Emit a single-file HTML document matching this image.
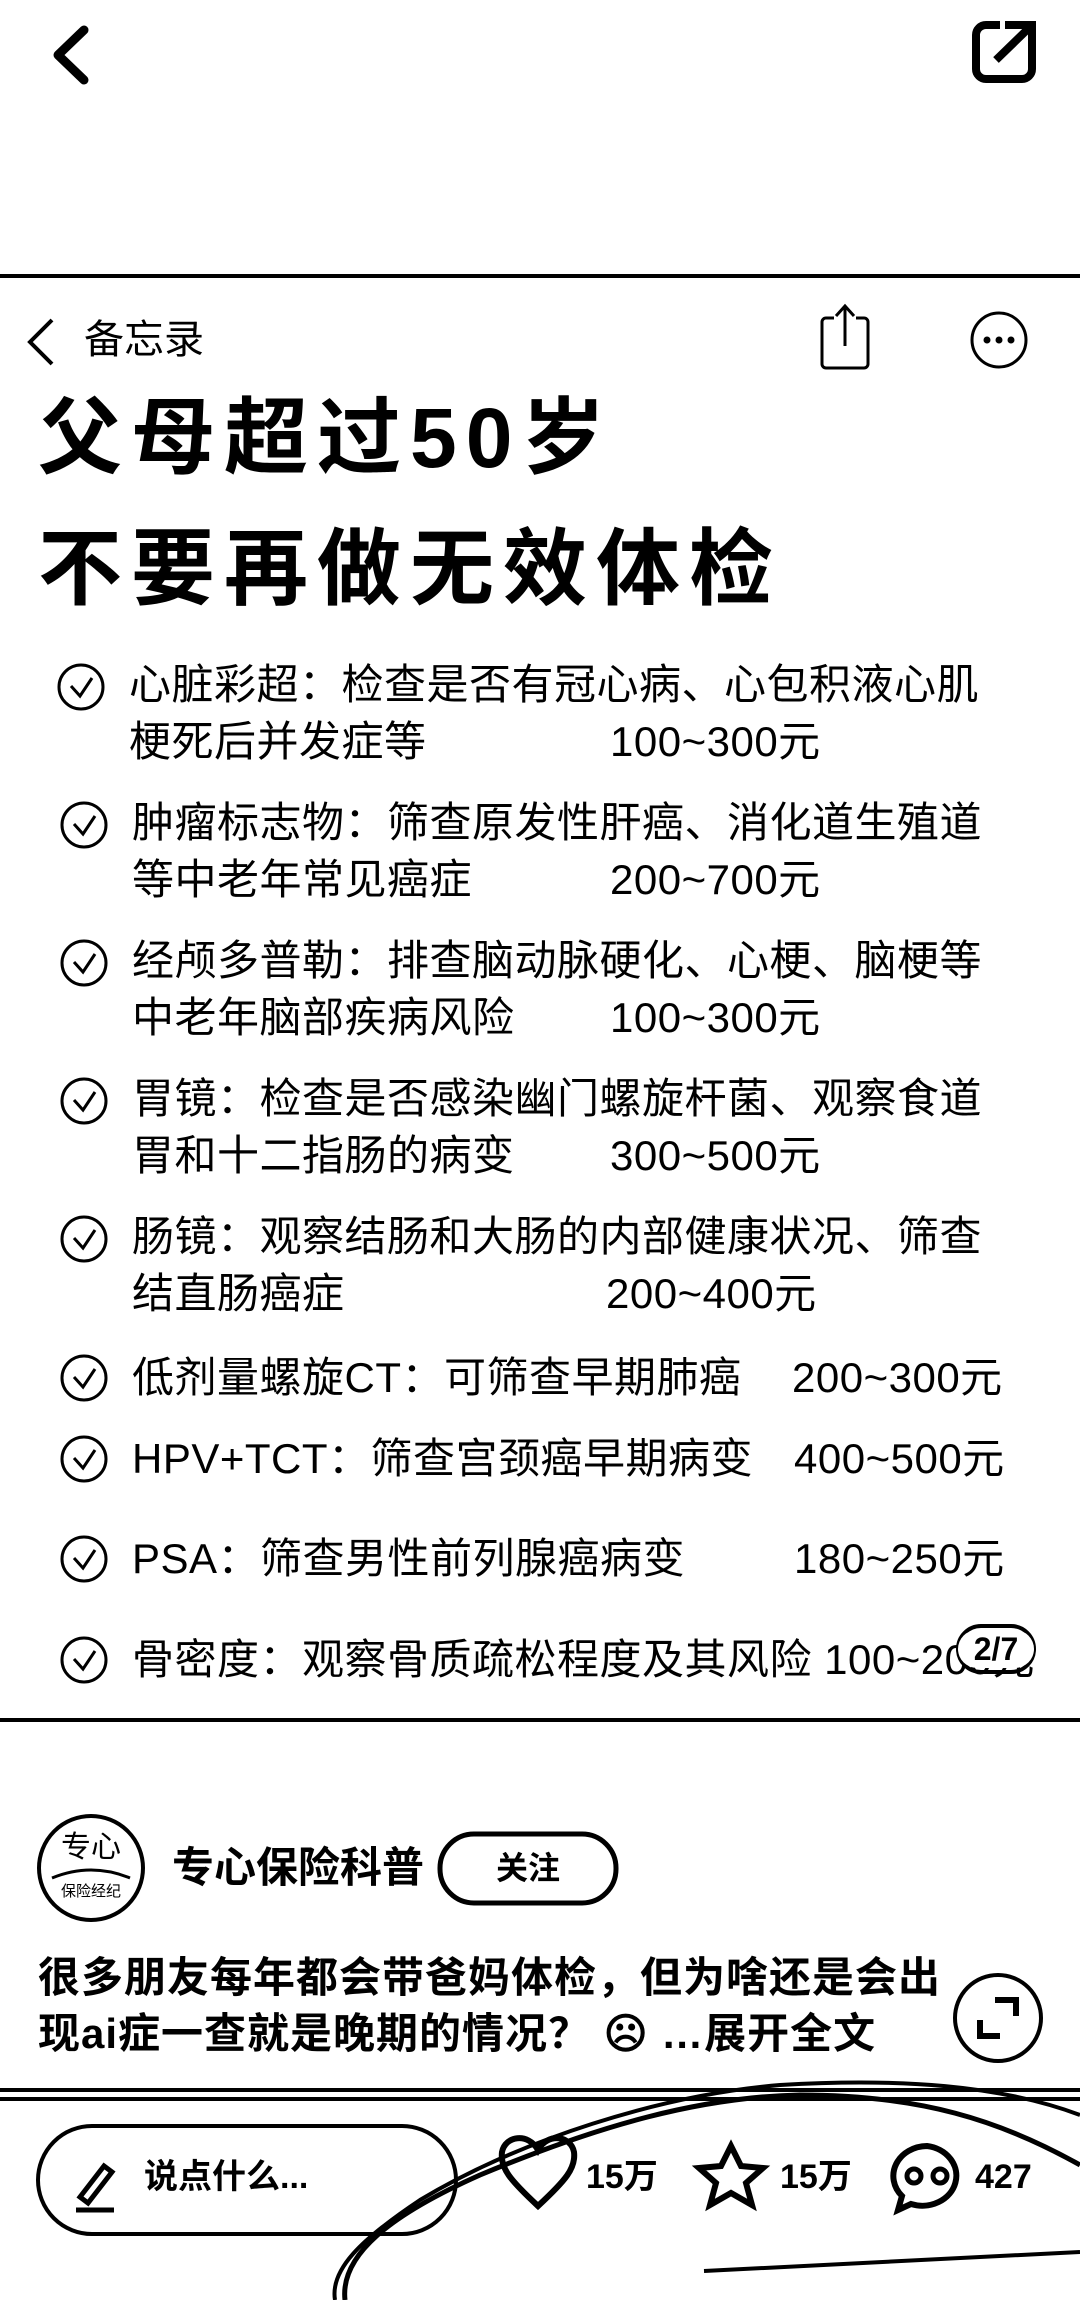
<!DOCTYPE html>
<html><head><meta charset="utf-8"><style>
html,body{margin:0;padding:0;background:#fff;}
body{width:1080px;height:2300px;position:relative;overflow:hidden;font-family:"Liberation Sans","Noto Sans CJK SC",sans-serif;color:#000;}
.a{position:absolute;white-space:nowrap;}
.t{font-size:42px;line-height:42px;letter-spacing:0.5px;}
.h{font-size:84px;line-height:84px;font-weight:bold;letter-spacing:9px;}
.b{font-weight:bold;}
</style></head><body>
<svg class="a" style="left:0;top:0" width="1080" height="2300" viewBox="0 0 1080 2300" fill="none" stroke="#000">
<path d="M84 30 L58 55 L84 80" stroke-width="9" stroke-linecap="round" stroke-linejoin="round"/>
<rect x="976" y="25" width="56" height="54" rx="10" stroke-width="8"/>
<rect x="1000" y="18" width="40" height="26" fill="#fff" stroke="none"/>
<path d="M1005 25 H1032 V50" stroke-width="8"/>
<path d="M996 60 L1030 27" stroke-width="8"/>
<line x1="0" y1="276" x2="1080" y2="276" stroke-width="4"/>
<path d="M52 320 L30 342 L52 364" stroke-width="4"/>
<path d="M834 318 H826 a4 4 0 0 0 -4 4 V364 a4 4 0 0 0 4 4 H864 a4 4 0 0 0 4 -4 V322 a4 4 0 0 0 -4 -4 H856" stroke-width="3"/>
<path d="M845 346 V306 M836 316 L845 306 L854 316" stroke-width="3"/>
<circle cx="999" cy="340" r="27" stroke-width="3"/>
<circle cx="987" cy="340" r="3.5" fill="#000" stroke="none"/>
<circle cx="999" cy="340" r="3.5" fill="#000" stroke="none"/>
<circle cx="1011" cy="340" r="3.5" fill="#000" stroke="none"/>
<g stroke-width="3">
<circle cx="81" cy="687" r="22"/><path d="M71 686 L80 696 L92 678"/>
<circle cx="84" cy="825" r="22"/><path d="M74 824 L83 834 L95 816"/>
<circle cx="84" cy="963" r="22"/><path d="M74 962 L83 972 L95 954"/>
<circle cx="84" cy="1101" r="22"/><path d="M74 1100 L83 1110 L95 1092"/>
<circle cx="84" cy="1239" r="22"/><path d="M74 1238 L83 1248 L95 1230"/>
<circle cx="84" cy="1378" r="22"/><path d="M74 1377 L83 1387 L95 1369"/>
<circle cx="84" cy="1459" r="22"/><path d="M74 1458 L83 1468 L95 1450"/>
<circle cx="84" cy="1559" r="22"/><path d="M74 1558 L83 1568 L95 1550"/>
<circle cx="84" cy="1660" r="22"/><path d="M74 1659 L83 1669 L95 1651"/>
</g>
<line x1="0" y1="1720" x2="1080" y2="1720" stroke-width="4"/>
<circle cx="91" cy="1868" r="52" stroke-width="4"/>
<path d="M52 1878 Q91 1862 130 1878" stroke-width="3"/>
<rect x="440" y="1834" width="176" height="69" rx="34" stroke-width="5"/>
<circle cx="998" cy="2018" r="43" stroke-width="4"/>
<path d="M995 2000 H1016 V2016 M1000 2036 H980 V2020" stroke-width="6"/>
<line x1="0" y1="2090" x2="1080" y2="2090" stroke-width="4"/>
<line x1="0" y1="2099" x2="1080" y2="2099" stroke-width="4"/>
<rect x="38" y="2126" width="418" height="108" rx="54" stroke-width="4"/>
<path d="M80 2197 L104 2166 L112 2172 L88 2203 Z M76 2210 H114" stroke-width="5"/>
<path d="M538 2206 C510 2180 500 2168 502 2152 C505 2136 528 2132 538 2150 C548 2132 571 2136 574 2152 C576 2168 566 2180 538 2206 Z" stroke-width="6" fill="#fff"/>
<path d="M731 2146 L741 2166 L763 2168 L746 2183 L752 2205 L731 2193 L710 2205 L716 2183 L699 2168 L721 2166 Z" stroke-width="6" fill="#fff"/>
<path d="M927 2146 a34 30 0 1 1 -16 58 L898 2210 L902 2196 a34 30 0 0 1 25 -50 Z" stroke-width="6" fill="#fff"/>
<circle cx="914" cy="2176" r="7" stroke-width="5"/><circle cx="940" cy="2176" r="7" stroke-width="5"/>
<path d="M1080 2165 C1000 2120 920 2095 800 2095 C700 2097 600 2125 480 2175 C390 2215 340 2255 345 2300" stroke-width="5"/>
<path d="M1080 2115 C1000 2085 900 2078 780 2085 C660 2095 520 2140 420 2200 C360 2240 330 2270 335 2300" stroke-width="4"/>
<path d="M704 2271 L1080 2252" stroke-width="4"/>
<rect x="958" y="1626" width="76" height="46" rx="23" fill="#fff" stroke-width="4"/>
</svg>

<div class="a" style="left:84px;top:318px;font-size:40px;line-height:44px;">备忘录</div>
<div class="a h" style="left:38px;top:396px;">父母超过50岁</div>
<div class="a h" style="left:38px;top:527px;">不要再做无效体检</div>

<div class="a t" style="left:129px;top:664px;">心脏彩超：检查是否有冠心病、心包积液心肌</div>
<div class="a t" style="left:129px;top:721px;">梗死后并发症等</div>
<div class="a t" style="left:610px;top:721px;">100~300元</div>
<div class="a t" style="left:132px;top:802px;">肿瘤标志物：筛查原发性肝癌、消化道生殖道</div>
<div class="a t" style="left:132px;top:859px;">等中老年常见癌症</div>
<div class="a t" style="left:610px;top:859px;">200~700元</div>
<div class="a t" style="left:132px;top:940px;">经颅多普勒：排查脑动脉硬化、心梗、脑梗等</div>
<div class="a t" style="left:132px;top:997px;">中老年脑部疾病风险</div>
<div class="a t" style="left:610px;top:997px;">100~300元</div>
<div class="a t" style="left:132px;top:1078px;">胃镜：检查是否感染幽门螺旋杆菌、观察食道</div>
<div class="a t" style="left:132px;top:1135px;">胃和十二指肠的病变</div>
<div class="a t" style="left:610px;top:1135px;">300~500元</div>
<div class="a t" style="left:132px;top:1216px;">肠镜：观察结肠和大肠的内部健康状况、筛查</div>
<div class="a t" style="left:132px;top:1273px;">结直肠癌症</div>
<div class="a t" style="left:606px;top:1273px;">200~400元</div>
<div class="a t" style="left:132px;top:1357px;">低剂量螺旋CT：可筛查早期肺癌</div>
<div class="a t" style="left:792px;top:1357px;">200~300元</div>
<div class="a t" style="left:132px;top:1438px;">HPV+TCT：筛查宫颈癌早期病变</div>
<div class="a t" style="left:794px;top:1438px;">400~500元</div>
<div class="a t" style="left:132px;top:1538px;">PSA：筛查男性前列腺癌病变</div>
<div class="a t" style="left:794px;top:1538px;">180~250元</div>
<div class="a t" style="left:132px;top:1639px;">骨密度：观察骨质疏松程度及其风险 100~200元</div>
<div class="a b" style="left:958px;top:1630px;width:76px;text-align:center;font-size:32px;line-height:38px;background:#fff;border-radius:20px;">2/7</div>

<div class="a" style="left:52px;top:1832px;width:78px;text-align:center;font-size:30px;line-height:32px;">专心</div>
<div class="a" style="left:52px;top:1884px;width:78px;text-align:center;font-size:15px;line-height:16px;">保险经纪</div>
<div class="a b" style="left:172px;top:1845px;font-size:42px;line-height:46px;">专心保险科普</div>
<div class="a b" style="left:440px;top:1850px;width:176px;text-align:center;font-size:32px;line-height:36px;">关注</div>
<div class="a b" style="left:38px;top:1956px;font-size:42px;line-height:44px;letter-spacing:1px;">很多朋友每年都会带爸妈体检，但为啥还是会出</div>
<div class="a b" style="left:38px;top:2012px;font-size:42px;line-height:44px;letter-spacing:1px;">现ai症一查就是晚期的情况？ ☹ …展开全文</div>

<div class="a b" style="left:144px;top:2158px;font-size:34px;line-height:38px;">说点什么...</div>
<div class="a b" style="left:586px;top:2158px;font-size:34px;line-height:38px;">15万</div>
<div class="a b" style="left:780px;top:2158px;font-size:34px;line-height:38px;">15万</div>
<div class="a b" style="left:975px;top:2158px;font-size:34px;line-height:38px;">427</div>
</body></html>
